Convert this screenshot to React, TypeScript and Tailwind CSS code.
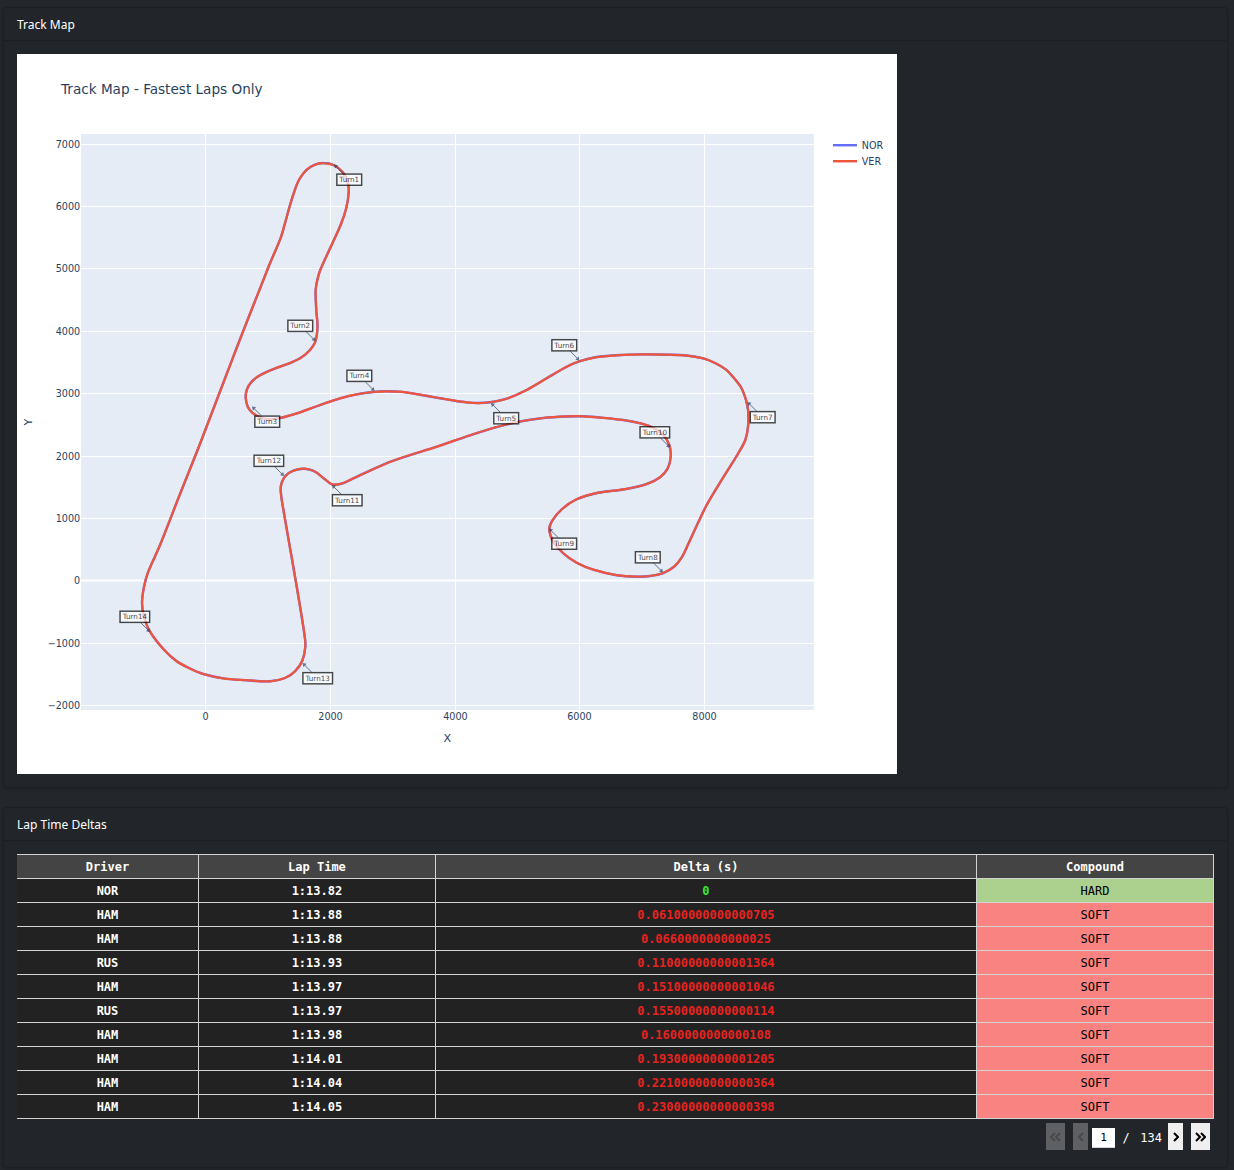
import React from "react";

type Point = [number, number];

/* ---------- chart geometry ---------- */

const CHART_LEFT = 17;
const CHART_TOP = 54;
const SCALE = 1.25;

const sx = (x: number) => Math.round((x - CHART_LEFT) * SCALE * 10) / 10;
const sy = (y: number) => Math.round((y - CHART_TOP) * SCALE * 10) / 10;

const TRACK: Point[] = [
  [323.3, 163], [334, 165.3], [343, 172.5], [347.7, 182], [348.7, 192], [346.3, 208], [341, 224], [333, 242],
  [320.3, 270], [317.3, 280], [315.6, 291], [316.3, 310], [317.5, 326.7], [315.3, 341.7], [309.3, 350.7],
  [300, 358.3], [290, 363], [273, 369.3], [260, 375.3], [251.7, 381.7], [247, 389.3], [245.7, 397.3],
  [247.7, 406.7], [252.3, 412.6], [260, 417.3], [269.3, 419.3], [280, 418], [300, 412.3], [320, 405],
  [340, 398.3], [356.7, 394.3], [373.3, 392], [386.7, 391.3], [401.7, 391.8], [420, 394.7], [440, 398.2],
  [453.3, 400.5], [466.7, 402.4], [478.3, 403], [491.7, 402], [506.7, 398.7], [526.7, 390], [546.7, 378.3],
  [566.7, 366.7], [579.3, 361.3], [596.7, 357], [620, 355], [643.3, 354.4], [666.7, 354.7], [686.7, 355.5],
  [703.3, 358.4], [715, 363], [726, 369.6], [733.3, 377.3], [741, 387.3], [746, 400], [748.3, 411.7],
  [748, 426.7], [745.3, 440], [738.3, 453.3], [721.7, 479.8], [706.7, 505], [698.3, 522.3], [688.3, 544],
  [681.7, 557.3], [674, 566.7], [663.3, 573], [650, 576], [636.7, 576.7], [616.7, 575.2], [593.3, 569.7],
  [576.7, 562.7], [563.3, 553.3], [553.3, 541.7], [549.3, 529.3], [552.3, 520.7], [561.7, 509.3],
  [576.7, 499.3], [598.3, 492.7], [625, 489.2], [646.7, 484], [660, 477.3], [667.7, 468.3], [670.7, 456.7],
  [669.3, 445], [663.3, 435], [653.3, 428], [641.7, 423.7], [623.3, 420], [600, 417.5], [583.3, 416.3],
  [566.7, 416.5], [543.3, 418], [520, 421.5], [496.7, 427], [470, 435.3], [437, 446.6], [393.3, 460.7],
  [360, 475.2], [343.3, 483], [335, 484.7], [330.7, 483.7], [323.3, 478], [316, 472.2], [309.3, 469.5],
  [302.7, 468.7], [293.3, 470.7], [285.7, 475.7], [281.7, 482.7], [280.7, 490], [282.3, 503.3],
  [293.3, 566.7], [304.3, 633.3], [305.3, 646.7], [302.3, 660.7], [295, 671.3], [285, 678], [270, 681.3],
  [246.7, 680.2], [223.3, 678.3], [203.3, 674], [190, 668.5], [176.7, 661.3], [163.3, 649], [150, 631.7],
  [144, 616.7], [142, 603.3], [144, 586.7], [148.3, 571.7], [160, 545], [180, 494], [201.5, 440],
  [237, 347], [268.3, 267.5], [280.5, 238.3], [285, 223.3], [290, 205], [295, 189.5], [299.3, 179.3],
  [306, 170.3], [314, 165],
];

function smoothClosedPath(points: Point[]): string {
  const n = points.length;
  const dirs = points.map((_, i) => {
    const a = points[(i - 1 + n) % n];
    const b = points[(i + 1) % n];
    const len = Math.hypot(b[0] - a[0], b[1] - a[1]);
    return [(b[0] - a[0]) / len, (b[1] - a[1]) / len];
  });
  let d = `M${sx(points[0][0])} ${sy(points[0][1])}`;
  for (let i = 0; i < n; i++) {
    const j = (i + 1) % n;
    const p = points[i];
    const q = points[j];
    const k = Math.hypot(q[0] - p[0], q[1] - p[1]) / 3;
    d +=
      `C${sx(p[0] + dirs[i][0] * k)} ${sy(p[1] + dirs[i][1] * k)} ` +
      `${sx(q[0] - dirs[j][0] * k)} ${sy(q[1] - dirs[j][1] * k)} ${sx(q[0])} ${sy(q[1])}`;
  }
  return d + "Z";
}

const TRACK_PATH = smoothClosedPath(TRACK);

const X_TICKS: [string, number][] = [
  ["0", 205.5], ["2000", 330.5], ["4000", 455.5], ["6000", 579.5], ["8000", 704.5],
];

const Y_TICKS: [string, number][] = [
  ["7000", 144.5], ["6000", 206.5], ["5000", 268.5], ["4000", 331.5], ["3000", 393.5],
  ["2000", 456.5], ["1000", 518.5], ["0", 580.5], ["−1000", 643.5], ["−2000", 705.5],
];

/* name, arrow tip, side the label sits on (1 = below right, -1 = above left) */
const TURNS: [string, number, number, number][] = [
  ["Turn1", 334, 164.5, 1], ["Turn2", 315.5, 341, -1], ["Turn3", 252, 406.5, 1],
  ["Turn4", 374.5, 391, -1], ["Turn5", 491, 403, 1], ["Turn6", 579.5, 360.5, -1],
  ["Turn7", 747.5, 402, 1], ["Turn8", 663, 572.5, -1], ["Turn9", 549, 528.5, 1],
  ["Turn10", 670, 447.5, -1], ["Turn11", 332, 485, 1], ["Turn12", 284, 476, -1],
  ["Turn13", 302.5, 663, 1], ["Turn14", 150, 632, -1],
];

function TrackChart() {
  return (
    <svg
      viewBox="0 0 1100 900"
      role="img"
      aria-label="Track Map - Fastest Laps Only"
      className="block w-full max-w-[880px] bg-white"
      fontFamily='"DejaVu Sans", Verdana, sans-serif'
      fill="#2a3f5f"
    >
      <text x="55" y="50" fontSize="17">Track Map - Fastest Laps Only</text>
      <rect x="80" y="100" width="916" height="720" fill="#e5ecf6" />
      <g stroke="#ffffff" strokeWidth="1.25">
        {X_TICKS.map(([label, x]) => (
          <line key={label} x1={sx(x)} x2={sx(x)} y1="100" y2="820" />
        ))}
        {Y_TICKS.map(([label, y]) => (
          <line key={label} x1="80" x2="996" y1={sy(y)} y2={sy(y)} strokeWidth={label === "0" ? 2.5 : 1.25} />
        ))}
      </g>
      <g fontSize="12">
        {X_TICKS.map(([label, x]) => (
          <text key={label} x={sx(x)} y="833" textAnchor="middle">{label}</text>
        ))}
        {Y_TICKS.map(([label, y]) => (
          <text key={label} x="79" y={sy(y) + 4} textAnchor="end">{label}</text>
        ))}
      </g>
      <text x="538" y="860" fontSize="14" textAnchor="middle">X</text>
      <text transform="translate(19 460) rotate(-90)" fontSize="14" textAnchor="middle">Y</text>

      <path d={TRACK_PATH} fill="none" stroke="#636efa" strokeWidth="3" strokeLinejoin="round" />
      <path d="M911 433L914 446L914 462" fill="none" stroke="#636efa" strokeWidth="2" />
      <path d={TRACK_PATH} fill="none" stroke="#ef553b" strokeWidth="2.8" strokeLinejoin="round" />

      {TURNS.map(([name, tx, ty, side]) => {
        const width = name.length > 5 ? 37 : 31;
        const x = sx(tx);
        const y = sy(ty);
        const cx = x + side * 19;
        const cy = y + side * 19;
        return (
          <g key={name} opacity="0.7">
            <line x1={cx} y1={cy} x2={x + side} y2={y + side} stroke="#2a3f5f" strokeWidth="1.25" />
            <path
              d={`M${x} ${y}L${x + side * 5} ${y + side}L${x + side * 3} ${y + side * 3}L${x + side} ${y + side * 5}Z`}
              fill="#2a3f5f"
            />
            <rect x={cx - width / 2} y={cy - 7} width={width} height="14" fill="#ffffff" stroke="#000000" strokeWidth="1.8" />
            <text x={cx} y={cy + 3} fontSize="9" textAnchor="middle" fill="#000000">{name}</text>
          </g>
        );
      })}

      <g fontSize="12">
        <line x1="1020" x2="1050" y1="114" y2="114" stroke="#636efa" strokeWidth="3" />
        <text x="1056" y="119">NOR</text>
        <line x1="1020" x2="1050" y1="134" y2="134" stroke="#ef553b" strokeWidth="3" />
        <text x="1056" y="139">VER</text>
      </g>
    </svg>
  );
}

/* ---------- lap table ---------- */

interface Lap {
  driver: string;
  time: string;
  delta: string;
  compound: "HARD" | "SOFT";
}

const LAPS: Lap[] = [
  { driver: "NOR", time: "1:13.82", delta: "0", compound: "HARD" },
  { driver: "HAM", time: "1:13.88", delta: "0.06100000000000705", compound: "SOFT" },
  { driver: "HAM", time: "1:13.88", delta: "0.0660000000000025", compound: "SOFT" },
  { driver: "RUS", time: "1:13.93", delta: "0.11000000000001364", compound: "SOFT" },
  { driver: "HAM", time: "1:13.97", delta: "0.15100000000001046", compound: "SOFT" },
  { driver: "RUS", time: "1:13.97", delta: "0.15500000000000114", compound: "SOFT" },
  { driver: "HAM", time: "1:13.98", delta: "0.1600000000000108", compound: "SOFT" },
  { driver: "HAM", time: "1:14.01", delta: "0.19300000000001205", compound: "SOFT" },
  { driver: "HAM", time: "1:14.04", delta: "0.22100000000000364", compound: "SOFT" },
  { driver: "HAM", time: "1:14.05", delta: "0.23000000000000398", compound: "SOFT" },
];

const HEAD = "h-[25px] border-y border-r border-[#d3d3d3] bg-[#444444] p-0 text-center font-bold text-white";
const CELL = "h-6 border-b border-r border-[#d3d3d3] p-0 text-center";

function LapTable() {
  return (
    <table className="w-full table-fixed border-separate border-spacing-0 text-xs leading-4">
      <colgroup>
        <col className="w-[15.2%]" />
        <col className="w-[19.8%]" />
        <col className="w-[45.2%]" />
        <col className="w-[19.8%]" />
      </colgroup>
      <thead>
        <tr>
          <th scope="col" className={HEAD}>Driver</th>
          <th scope="col" className={HEAD}>Lap Time</th>
          <th scope="col" className={HEAD}>Delta (s)</th>
          <th scope="col" className={HEAD}>Compound</th>
        </tr>
      </thead>
      <tbody>
        {LAPS.map((lap, i) => (
          <tr key={i}>
            <td className={`${CELL} bg-[#222222] font-bold text-white`}>{lap.driver}</td>
            <td className={`${CELL} bg-[#222222] font-bold text-white`}>{lap.time}</td>
            <td className={`${CELL} bg-[#222222] font-bold ${lap.delta === "0" ? "text-[#39e82c]" : "text-[#e8231f]"}`}>
              {lap.delta}
            </td>
            <td className={`${CELL} text-black ${lap.compound === "HARD" ? "bg-[#acd18f]" : "bg-[#f88380]"}`}>
              {lap.compound}
            </td>
          </tr>
        ))}
      </tbody>
    </table>
  );
}

function Chevron({ double = false, flip = false }: { double?: boolean; flip?: boolean }) {
  return (
    <svg
      viewBox={double ? "0 0 11 10" : "0 0 6 10"}
      className={`h-2.5 ${double ? "w-[11px]" : "w-1.5"} ${flip ? "rotate-180" : ""}`}
      fill="none"
      stroke="currentColor"
      strokeWidth="2"
      aria-hidden="true"
    >
      <path d="M1 1L5 5L1 9" />
      {double && <path d="M6 1L10 5L6 9" />}
    </svg>
  );
}

const PAGE_BUTTON = "flex h-[27px] items-center justify-center bg-[#efefef] text-black disabled:bg-[#5f6063] disabled:text-[#47494b]";

function Pagination() {
  return (
    <nav aria-label="Table pages" className="flex items-center justify-end p-1 text-xs text-white">
      <button type="button" disabled aria-label="First page" className={`${PAGE_BUTTON} mr-2 w-[19px]`}>
        <Chevron double flip />
      </button>
      <button type="button" disabled aria-label="Previous page" className={`${PAGE_BUTTON} mr-1 w-[15px]`}>
        <Chevron flip />
      </button>
      <input
        type="text"
        aria-label="Current page"
        defaultValue="1"
        className="mt-0.5 h-5 w-[23px] border-b border-[#d3d3d3] bg-white text-center text-[11px] text-black outline-none"
      />
      <span className="mt-0.5 w-[22px] text-center">/</span>
      <span className="mr-1.5 mt-0.5 w-[25px] text-right">134</span>
      <button type="button" aria-label="Next page" className={`${PAGE_BUTTON} mr-2 w-[15px]`}>
        <Chevron />
      </button>
      <button type="button" aria-label="Last page" className={`${PAGE_BUTTON} w-[19px]`}>
        <Chevron double />
      </button>
    </nav>
  );
}

function Card({ title, children }: { title: string; children: React.ReactNode }) {
  return (
    <section className="rounded border border-[#1c1f22] bg-[#22262a] shadow-sm">
      <h2 className="h-[33px] border-b border-[#1c1f22] px-[13px] pt-2 text-xs leading-[18px] text-white">{title}</h2>
      <div className="p-[13px]">{children}</div>
    </section>
  );
}

export default function App() {
  return (
    <main className='flex min-h-screen flex-col gap-[19px] bg-[#23272b] pb-0.5 pl-[3px] pr-1.5 pt-[7px] font-["Noto_Sans","Open_Sans",sans-serif]'>
      <Card title="Track Map">
        <TrackChart />
      </Card>
      <Card title="Lap Time Deltas">
        <div className='font-["DejaVu_Sans_Mono","Liberation_Mono",monospace]'>
          <LapTable />
          <Pagination />
        </div>
      </Card>
    </main>
  );
}
